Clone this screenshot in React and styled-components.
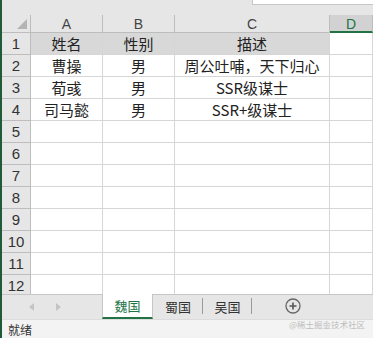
import React from "react";
import styled, { createGlobalStyle } from "styled-components";

const Global = createGlobalStyle`
  html, body { margin: 0; padding: 0; background: #fff; }
  body { font-family: "Noto Sans CJK SC", "Liberation Sans", sans-serif; }
  #root { width: 373px; height: 338px; overflow: hidden; }
`;

const Frame = styled.div`
  width: 373px;
  height: 338px;
  display: flex;
  border-left: 2px solid #1f5b39;
  box-sizing: border-box;
  flex-direction: column;
  background: #e6e6e6;
  overflow: hidden;
`;

const TopBand = styled.div`
  height: 15px;
  flex: none;
  display: flex;
  justify-content: flex-end;
  align-items: flex-start;
  background: #e6e6e6;
`;

const FormulaBox = styled.div`
  width: 120px;
  height: 4px;
  background: #fff;
  border-left: 1px solid #c6c6c6;
  border-bottom: 1px solid #c6c6c6;
`;

const Sheet = styled.div`
  height: 279px;
  flex: none;
  overflow: hidden;
  display: grid;
  grid-template-columns: 29px 72px 72px 155px 1fr;
  grid-auto-rows: 22px;
  grid-template-rows: 18px;
  background: #fff;
`;

const Corner = styled.div`
  background: #e6e6e6;
  border-right: 1px solid #bdbdbd;
  border-bottom: 1px solid #bdbdbd;
  position: relative;
  &::after {
    content: "";
    position: absolute;
    right: 3px;
    bottom: 3px;
    width: 0;
    height: 0;
    border-left: 10px solid transparent;
    border-bottom: 10px solid #b4b4b4;
  }
`;

const ColHead = styled.div`
  background: ${(p) => (p.$sel ? "#d2d2d2" : "#e6e6e6")};
  color: ${(p) => (p.$sel ? "#217346" : "#444")};
  border-right: 1px solid #bdbdbd;
  border-bottom: ${(p) => (p.$sel ? "2px solid #217346" : "1px solid #bdbdbd")};
  font-family: "Liberation Sans", "Noto Sans CJK SC", sans-serif;
  font-size: 14px;
  display: flex;
  align-items: center;
  justify-content: center;
  line-height: 1;
  padding-top: 1px;
`;

const RowHead = styled.div`
  background: #e6e6e6;
  color: #333;
  border-right: 1px solid #bdbdbd;
  border-bottom: 1px solid #bdbdbd;
  font-family: "Liberation Sans", sans-serif;
  font-size: 15px;
  display: flex;
  align-items: center;
  justify-content: center;
  line-height: 1;
`;

const Cell = styled.div`
  background: ${(p) => (p.$fill ? "#d8d8d8" : "#fff")};
  color: #222;
  border-right: 1px solid #d6d6d6;
  border-bottom: 1px solid #d6d6d6;
  font-family: "Noto Sans CJK SC", "Liberation Sans", sans-serif;
  font-size: 15px;
  display: flex;
  align-items: center;
  justify-content: center;
  white-space: nowrap;
  overflow: hidden;
  line-height: 1;
`;

const TabBar = styled.div`
  height: 24px;
  flex: none;
  display: flex;
  align-items: stretch;
  background: #e6e6e6;
  border-top: 1px solid #c6c6c6;
`;

const Nav = styled.div`
  width: 100px;
  display: flex;
  align-items: center;
  padding-left: 27px;
  gap: 22px;
  box-sizing: border-box;
`;

const Arrow = styled.span`
  width: 0;
  height: 0;
  border-top: 4px solid transparent;
  border-bottom: 4px solid transparent;
  ${(p) => (p.$dir === "left" ? "border-right: 5px solid #c4c4c4;" : "border-left: 5px solid #c4c4c4;")}
`;

const Tab = styled.div`
  width: ${(p) => p.$w}px;
  display: flex;
  align-items: center;
  justify-content: center;
  font-size: 13px;
  color: ${(p) => (p.$active ? "#217346" : "#333")};
  background: ${(p) => (p.$active ? "#fff" : "transparent")};
  border-bottom: ${(p) => (p.$active ? "2px solid #217346" : "2px solid transparent")};
  border-left: ${(p) => (p.$active ? "1px solid #c6c6c6" : "none")};
  border-right: ${(p) => (p.$active ? "1px solid #c6c6c6" : "none")};
  margin-top: ${(p) => (p.$active ? "-1px" : "0")};
  box-sizing: border-box;
  position: relative;
  ${(p) =>
    p.$sep &&
    `&::after {
      content: "";
      position: absolute;
      right: 0;
      top: 3px;
      bottom: 3px;
      width: 1px;
      background: #9a9a9a;
    }`}
`;

const AddWrap = styled.div`
  width: 82px;
  display: flex;
  align-items: center;
  justify-content: center;
  padding-bottom: 2px;
`;

const Status = styled.div`
  flex: 1;
  background: #f3f3f3;
  display: flex;
  align-items: center;
  justify-content: space-between;
  padding: 0 8px 0 6px;
  border-top: 1px solid #dcdcdc;
`;

const StatusText = styled.span`
  font-size: 12px;
  color: #333;
`;

const Watermark = styled.span`
  font-size: 8.5px;
  color: #bdbdbd;
  margin-top: -10px;
`;

const cols = ["A", "B", "C", "D"];
const data = [
  ["姓名", "性别", "描述"],
  ["曹操", "男", "周公吐哺，天下归心"],
  ["荀彧", "男", "SSR级谋士"],
  ["司马懿", "男", "SSR+级谋士"],
];

export default function App() {
  const rows = [];
  for (let r = 1; r <= 12; r++) {
    const vals = data[r - 1] || ["", "", ""];
    rows.push(<RowHead key={`h${r}`}>{r}</RowHead>);
    vals.forEach((v, i) =>
      rows.push(
        <Cell key={`c${r}-${i}`} $fill={r === 1}>
          {v}
        </Cell>
      )
    );
    rows.push(<Cell key={`d${r}`} />);
  }
  return (
    <>
      <Global />
      <Frame>
        <TopBand>
          <FormulaBox />
        </TopBand>
        <Sheet>
          <Corner />
          {cols.map((c) => (
            <ColHead key={c} $sel={c === "D"}>
              {c}
            </ColHead>
          ))}
          {rows}
        </Sheet>
        <TabBar>
          <Nav>
            <Arrow $dir="left" />
            <Arrow $dir="right" />
          </Nav>
          <Tab $w={51} $active>
            魏国
          </Tab>
          <Tab $w={50} $sep>
            蜀国
          </Tab>
          <Tab $w={49} $sep>
            吴国
          </Tab>
          <AddWrap>
            <svg width="16" height="16" viewBox="0 0 16 16">
              <circle cx="8" cy="8" r="7" fill="none" stroke="#666" strokeWidth="1.3" />
              <path d="M8 4.5v7M4.5 8h7" stroke="#555" strokeWidth="1.6" />
            </svg>
          </AddWrap>
        </TabBar>
        <Status>
          <StatusText>就绪</StatusText>
          <Watermark>@稀土掘金技术社区</Watermark>
        </Status>
      </Frame>
    </>
  );
}
